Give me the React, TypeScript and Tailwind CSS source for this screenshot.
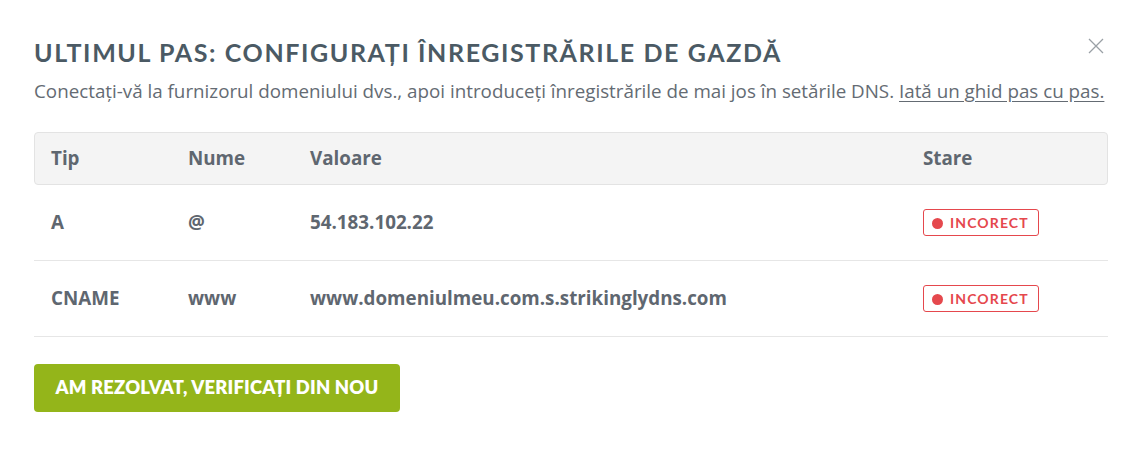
import React from "react";

const rows = [
  { tip: "A", nume: "@", valoare: "54.183.102.22" },
  { tip: "CNAME", nume: "www", valoare: "www.domeniulmeu.com.s.strikinglydns.com" },
];

function Badge() {
  return (
    <span className="inline-flex items-center gap-[7px] h-[27px] pl-[8px] pr-[9px] border border-[#e5484d] rounded-[3px] text-[#e5484d] text-[14px] font-bold tracking-[0.08em] [font-family:Lato,sans-serif]">
      <span className="w-[11px] h-[11px] rounded-full bg-[#e5484d] mt-[2px]" />
      <span className="leading-none">INCORECT</span>
    </span>
  );
}

export default function App() {
  return (
    <div className="w-[1143px] h-[463px] bg-white px-[34px] pt-[34px] [font-family:'Open_Sans',sans-serif] relative">
      <button className="absolute right-[39px] top-[38px] text-[#9aa0a6]" aria-label="close">
        <svg width="16" height="16" viewBox="0 0 16 16" fill="none" stroke="currentColor" strokeWidth="1.3">
          <path d="M1 1L15 15M15 1L1 15" />
        </svg>
      </button>
      <h1 className="text-[25px] font-bold text-[#4b5a64] leading-[36px] tracking-[1.6px] [font-family:Lato,sans-serif]">
        ULTIMUL PAS: CONFIGURAȚI ÎNREGISTRĂRILE DE GAZDĂ
      </h1>
      <p className="text-[18.8px] text-[#646b73] mt-[8px] leading-[26px] whitespace-nowrap">
        Conectați-vă la furnizorul domeniului dvs., apoi introduceți înregistrările de mai jos în setările DNS.{" "}
        <span className="underline underline-offset-[3px]">Iată un ghid pas cu pas.</span>
      </p>
      <div className="mt-[28px] w-[1074px]">
        <div className="grid grid-cols-[137px_122px_613px_1fr] items-center h-[53px] bg-[#f4f4f4] border border-[#e3e3e3] rounded-[4px] text-[18.8px] font-bold text-[#5f6770] pl-[16px]">
          <span>Tip</span>
          <span>Nume</span>
          <span>Valoare</span>
          <span>Stare</span>
        </div>
        {rows.map((r) => (
          <div
            key={r.tip}
            className="grid grid-cols-[137px_122px_613px_1fr] items-center h-[76px] border-b border-[#e6e6e6] text-[18.8px] font-bold text-[#5f6770] pl-[17px]"
          >
            <span>{r.tip}</span>
            <span>{r.nume}</span>
            <span>{r.valoare}</span>
            <span>
              <Badge />
            </span>
          </div>
        ))}
      </div>
      <button className="mt-[27px] h-[48px] w-[366px] rounded-[4px] bg-[#94b51a] text-white text-[18.4px] font-extrabold tracking-[0.01em] [font-family:Lato,sans-serif]">
        AM REZOLVAT, VERIFICAȚI DIN NOU
      </button>
    </div>
  );
}
